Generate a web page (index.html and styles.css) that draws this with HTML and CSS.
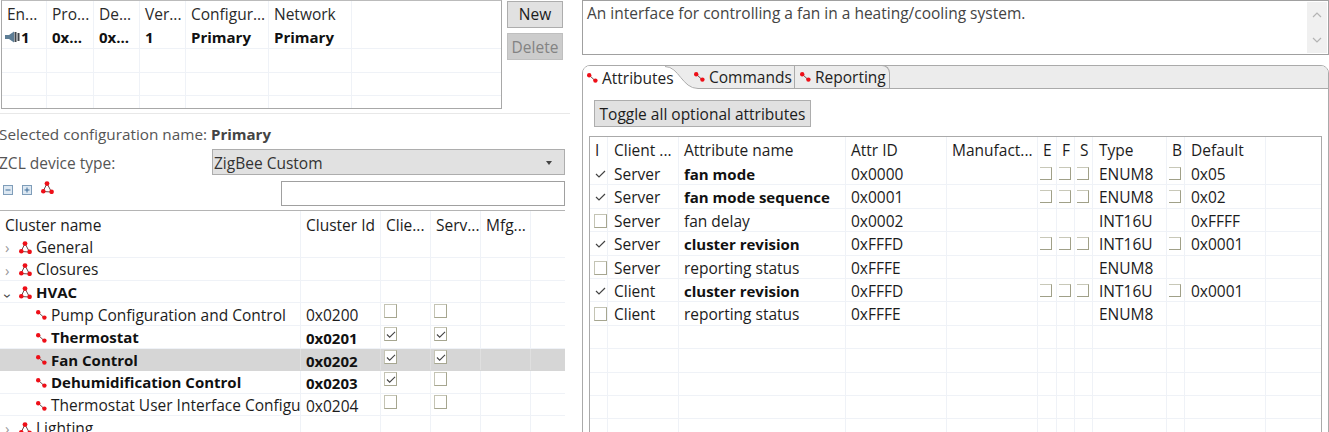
FILE: index.html
```html
<!DOCTYPE html>
<html lang="en">
<head>
<meta charset="utf-8">
<title>Fan Control</title>
<link rel="stylesheet" href="styles.css">
</head>
<body>
<svg class="defs" width="0" height="0" aria-hidden="true">
  <symbol id="group" viewBox="0 0 13 13">
    <path d="M6 2.5 2 10.5M6 2.5 10.5 11M2 10.5 10.5 11" fill="none" stroke="#6a4a4a" stroke-width="1"/>
    <circle cx="6" cy="2.6" r="2.4" fill="#ee0f18"/><circle cx="2.3" cy="10.3" r="2.3" fill="#ee0f18"/><circle cx="10.6" cy="10.8" r="2.3" fill="#ee0f18"/>
  </symbol>
  <symbol id="leaf" viewBox="0 0 11 10">
    <path d="M2 2 8.5 8" stroke="#6a4a4a" stroke-width="1"/>
    <circle cx="2.2" cy="2.2" r="2.2" fill="#ee0f18"/><circle cx="8.4" cy="7.6" r="2.2" fill="#ee0f18"/>
  </symbol>
  <symbol id="tick" viewBox="0 0 11 10">
    <path d="M1 5 4 8 10 2" fill="none" stroke="#444" stroke-width="1.2"/>
  </symbol>
</svg>

<div class="left">
  <div class="endpoints">
    <div class="ep-table">
      <div class="ep-row ep-head"><span>En...</span><span>Pro...</span><span>De...</span><span>Ver...</span><span>Configur...</span><span>Network</span><span></span></div>
      <div class="ep-row strong"><span class="ep-first"><svg class="speaker" viewBox="0 0 15 12"><path d="M0 4h4l5-3.5v11L4 8H0z" fill="#5d7d95"/><path d="M9.500 1h2v10h-2zM12.500 2h2v8h-2z" fill="#3f444a"/></svg>1</span><span>0x...</span><span>0x...</span><span>1</span><span>Primary</span><span>Primary</span><span></span></div>
      <div class="ep-row"><span></span><span></span><span></span><span></span><span></span><span></span><span></span></div>
      <div class="ep-row"><span></span><span></span><span></span><span></span><span></span><span></span><span></span></div>
      <div class="ep-row"><span></span><span></span><span></span><span></span><span></span><span></span><span></span></div>
    </div>
    <div class="ep-buttons">
      <button class="btn">New</button>
      <button class="btn off">Delete</button>
    </div>
  </div>

  <p class="selected">Selected configuration name: <b>Primary</b></p>

  <div class="zcl">
    <span class="zcl-label">ZCL device type:</span>
    <div class="combo"><span>ZigBee Custom</span><i class="caret"></i></div>
  </div>

  <div class="tools">
    <svg class="tool" viewBox="0 0 10 10"><rect x=".5" y=".5" width="9" height="9" fill="#dde8f2" stroke="#7f9db9"/><path d="M2.5 5h5" stroke="#3d6d99"/></svg>
    <svg class="tool" viewBox="0 0 10 10"><rect x=".5" y=".5" width="9" height="9" fill="#dde8f2" stroke="#7f9db9"/><path d="M2.5 5h5M5 2.5v5" stroke="#3d6d99"/></svg>
    <svg class="tool-group"><use href="#group"/></svg>
    <input class="filter" type="text" aria-label="filter">
  </div>

  <div class="tree">
    <div class="tr head"><span>Cluster name</span><span>Cluster Id</span><span>Clie...</span><span>Serv...</span><span>Mfg...</span><span></span></div>
    <div class="tr"><span class="name"><i class="arrow">›</i><svg class="ic-group"><use href="#group"/></svg>General</span><span></span><span></span><span></span><span></span><span></span></div>
    <div class="tr"><span class="name"><i class="arrow">›</i><svg class="ic-group"><use href="#group"/></svg>Closures</span><span></span><span></span><span></span><span></span><span></span></div>
    <div class="tr strong"><span class="name"><i class="arrow open">›</i><svg class="ic-group"><use href="#group"/></svg>HVAC</span><span></span><span></span><span></span><span></span><span></span></div>
    <div class="tr"><span class="name sub"><svg class="ic-leaf"><use href="#leaf"/></svg>Pump Configuration and Control</span><span>0x0200</span><span class="cc"><i class="cb"></i></span><span class="cc"><i class="cb"></i></span><span></span><span></span></div>
    <div class="tr strong"><span class="name sub"><svg class="ic-leaf"><use href="#leaf"/></svg>Thermostat</span><span>0x0201</span><span class="cc"><i class="cb"><svg class="tick"><use href="#tick"/></svg></i></span><span class="cc"><i class="cb"><svg class="tick"><use href="#tick"/></svg></i></span><span></span><span></span></div>
    <div class="tr strong sel"><span class="name sub"><svg class="ic-leaf"><use href="#leaf"/></svg>Fan Control</span><span>0x0202</span><span class="cc"><i class="cb"><svg class="tick"><use href="#tick"/></svg></i></span><span class="cc"><i class="cb"><svg class="tick"><use href="#tick"/></svg></i></span><span></span><span></span></div>
    <div class="tr strong"><span class="name sub"><svg class="ic-leaf"><use href="#leaf"/></svg>Dehumidification Control</span><span>0x0203</span><span class="cc"><i class="cb"><svg class="tick"><use href="#tick"/></svg></i></span><span class="cc"><i class="cb"></i></span><span></span><span></span></div>
    <div class="tr"><span class="name sub"><svg class="ic-leaf"><use href="#leaf"/></svg>Thermostat User Interface Configuration</span><span>0x0204</span><span class="cc"><i class="cb"></i></span><span class="cc"><i class="cb"></i></span><span></span><span></span></div>
    <div class="tr"><span class="name"><i class="arrow">›</i><svg class="ic-group"><use href="#group"/></svg>Lighting</span><span></span><span></span><span></span><span></span><span></span></div>
  </div>
</div>

<div class="right">
  <div class="desc">
    <p>An interface for controlling a fan in a heating/cooling system.</p>
    <div class="scroll">
      <svg viewBox="0 0 10 6"><path d="M1 5 5 1l4 4" fill="none" stroke="#b4b4b4" stroke-width="1.2"/></svg>
      <svg viewBox="0 0 10 6"><path d="M1 1l4 4 4-4" fill="none" stroke="#b4b4b4" stroke-width="1.2"/></svg>
    </div>
  </div>

  <div class="folder">
    <div class="tabs">
      <div class="tab active"><svg class="ic-tab"><use href="#leaf"/></svg>Attributes</div>
      <svg class="tail" viewBox="0 0 33 23" preserveAspectRatio="none"><path d="M0 0C14 0 17 22 33 22V23H0Z" fill="#fff"/><path d="M0 .5C14 .5 17 22.5 33 22.5" fill="none" stroke="#aaa"/></svg>
      <div class="tab t2"><svg class="ic-tab"><use href="#leaf"/></svg>Commands</div>
      <div class="tab t3"><svg class="ic-tab"><use href="#leaf"/></svg>Reporting</div>
    </div>
    <div class="pane">
      <button class="btn toggle">Toggle all optional attributes</button>
      <div class="attrs">
        <div class="ar head"><span>I</span><span>Client ...</span><span>Attribute name</span><span>Attr ID</span><span>Manufact...</span><span>E</span><span>F</span><span>S</span><span>Type</span><span>B</span><span>Default</span><span></span></div>
        <div class="ar"><span class="ci"><svg class="tick2"><use href="#tick"/></svg></span><span>Server</span><span class="b">fan mode</span><span>0x0000</span><span></span><span class="cs"><i class="sq"></i></span><span class="cs"><i class="sq"></i></span><span class="cs"><i class="sq"></i></span><span>ENUM8</span><span class="cs"><i class="sq"></i></span><span>0x05</span><span></span></div>
        <div class="ar"><span class="ci"><svg class="tick2"><use href="#tick"/></svg></span><span>Server</span><span class="b">fan mode sequence</span><span>0x0001</span><span></span><span class="cs"><i class="sq"></i></span><span class="cs"><i class="sq"></i></span><span class="cs"><i class="sq"></i></span><span>ENUM8</span><span class="cs"><i class="sq"></i></span><span>0x02</span><span></span></div>
        <div class="ar"><span class="ci"><i class="cb"></i></span><span>Server</span><span>fan delay</span><span>0x0002</span><span></span><span></span><span></span><span></span><span>INT16U</span><span></span><span>0xFFFF</span><span></span></div>
        <div class="ar"><span class="ci"><svg class="tick2"><use href="#tick"/></svg></span><span>Server</span><span class="b">cluster revision</span><span>0xFFFD</span><span></span><span class="cs"><i class="sq"></i></span><span class="cs"><i class="sq"></i></span><span class="cs"><i class="sq"></i></span><span>INT16U</span><span class="cs"><i class="sq"></i></span><span>0x0001</span><span></span></div>
        <div class="ar"><span class="ci"><i class="cb"></i></span><span>Server</span><span>reporting status</span><span>0xFFFE</span><span></span><span></span><span></span><span></span><span>ENUM8</span><span></span><span></span><span></span></div>
        <div class="ar"><span class="ci"><svg class="tick2"><use href="#tick"/></svg></span><span>Client</span><span class="b">cluster revision</span><span>0xFFFD</span><span></span><span class="cs"><i class="sq"></i></span><span class="cs"><i class="sq"></i></span><span class="cs"><i class="sq"></i></span><span>INT16U</span><span class="cs"><i class="sq"></i></span><span>0x0001</span><span></span></div>
        <div class="ar"><span class="ci"><i class="cb"></i></span><span>Client</span><span>reporting status</span><span>0xFFFE</span><span></span><span></span><span></span><span></span><span>ENUM8</span><span></span><span></span><span></span></div>
        <div class="ar"><span></span><span></span><span></span><span></span><span></span><span></span><span></span><span></span><span></span><span></span><span></span><span></span></div>
        <div class="ar"><span></span><span></span><span></span><span></span><span></span><span></span><span></span><span></span><span></span><span></span><span></span><span></span></div>
        <div class="ar"><span></span><span></span><span></span><span></span><span></span><span></span><span></span><span></span><span></span><span></span><span></span><span></span></div>
        <div class="ar"><span></span><span></span><span></span><span></span><span></span><span></span><span></span><span></span><span></span><span></span><span></span><span></span></div>
        <div class="ar"><span></span><span></span><span></span><span></span><span></span><span></span><span></span><span></span><span></span><span></span><span></span><span></span></div>
      </div>
    </div>
  </div>
</div>
</body>
</html>
```
FILE: styles.css
```css
* { box-sizing: border-box; }
html, body { height: 432px; overflow: hidden; }
body {
  margin: 0;
  display: flex;
  background: #fff;
  color: #1c1c1c;
  font: 15.5px/20px "Open Sans", "Noto Sans", sans-serif;
}
.defs { position: absolute; }
p { margin: 0; }
i { font-style: normal; display: block; }
.strong, .ar .b { font-size: 15px; }
.left { width: 565px; flex: none; margin-right: 17px; }
.right { flex: 1; min-width: 0; }

.endpoints {
  display: flex;
  height: 114px;
  width: 570px;
  border-bottom: 1px solid #e8e8e8;
}
.ep-table {
  margin-left: 1px;
  width: 501px;
  height: 109px;
  border: 1px solid #a8a8a8;
  border-top-color: #bbb;
  overflow: hidden;
}
.ep-row {
  display: grid;
  grid-template-columns: 45px 47px 46px 46px 83px 83px 1fr;
  height: 23.4px;
  border-bottom: 1px solid #eff2f7;
  line-height: 23px;
}
.ep-head { height: 25px; border-bottom: 0; line-height: 27px; color: #2a2a2a; }
.ep-row span { padding-left: 5px; border-right: 1px solid #eff2f7; white-space: nowrap; overflow: hidden; }
.ep-row span:last-child { border-right: 0; }
.strong { font-weight: 700; color: #111; }
.ep-row .ep-first { padding-left: 3px; display: flex; align-items: center; }
.speaker { width: 15px; height: 12px; margin-right: 1px; flex: none; }
.ep-buttons { display: flex; flex-direction: column; gap: 5px; margin: 1px 0 0 5px; }
.btn {
  font: inherit;
  color: #1c1c1c;
  background: #e1e1e1;
  border: 1px solid #adadad;
  padding: 0 0 2px;
}
.ep-buttons .btn { width: 56px; height: 27px; }
.btn.off { background: #ccc; color: #838383; border-color: #bfbfbf; padding-bottom: 0; }

.selected { margin: 10px 0 0 -1px; color: #555; height: 19px; font-size: 15.3px; }
.selected b { color: #444; font-size: 15px; }

.zcl { display: flex; align-items: center; height: 26px; margin-top: 6px; }
.zcl-label { width: 213px; margin-left: -1px; padding-top: 2px; flex: none; color: #555; }
.combo {
  flex: 1;
  height: 26px;
  background: #e1e1e1;
  border: 1px solid #adadad;
  display: flex;
  align-items: center;
  justify-content: space-between;
  padding: 2px 12px 0 1px;
  color: #333;
}
.caret { width: 0; height: 0; border: 3.5px solid transparent; border-top: 4px solid #444; border-bottom: 0; }

.tools { display: flex; align-items: flex-start; height: 25px; margin-top: 6px; padding-left: 3px; }
.tool { width: 10px; height: 10px; margin: 4px 9px 0 0; flex: none; }
.tool-group { width: 13px; height: 13px; flex: none; }
.filter { width: 284px; height: 25px; margin-left: auto; border: 1px solid #a0a0a0; background: #fff; padding: 0; }

.tree { margin-top: 4px; border-top: 1px solid #b4b4b4; }
.tr {
  display: grid;
  grid-template-columns: 301px 80px 50px 50px 50px 1fr;
  height: 22.6px;
  border-bottom: 1px solid #eff2f7;
  line-height: 25px;
}
.tr.head { height: 24.6px; border-bottom: 0; line-height: 29px; }
.tr > span { padding-left: 5px; border-right: 1px solid #eff2f7; white-space: nowrap; overflow: hidden; }
.tr > span:last-child { border-right: 0; }
.tr .name { display: flex; align-items: center; padding: 2px 0 0 5px; }
.tr .name.sub { padding-left: 36px; }
.arrow { width: 14px; flex: none; color: #999; font-size: 15px; font-weight: 400; line-height: 18px; }
.arrow.open { color: #444; transform: rotate(90deg); text-align: center; transform-origin: 4px 9px; }
.ic-group { width: 13px; height: 13px; margin-right: 4px; flex: none; }
.ic-leaf { width: 11px; height: 10px; margin-right: 4px; flex: none; }
.tr.sel { background: #d6d6d6; border-bottom-color: #d6d6d6; }
.tr.sel > span { border-right-color: #dfdfdf; }
.tr > .cc { padding: 1px 0 0 3px; }
.cb {
  display: block;
  width: 13px;
  height: 14px;
  border: 1px solid #a6a690;
  border-top-color: #c4c4b4;
  border-left-color: #c4c4b4;
  background: #fff;
}
.tick { width: 10px; height: 9px; display: block; margin: 2px 0 0 1px; }

.desc {
  height: 55px;
  border: 1px solid #a0a0a0;
  display: flex;
  justify-content: space-between;
  padding: 1px 1px 1px 4px;
  color: #444;
}
.desc p { line-height: 23px; }
.scroll {
  width: 20px;
  background: #f0f0f0;
  display: flex;
  flex-direction: column;
  justify-content: space-between;
  align-items: center;
  padding: 10px 0;
}
.scroll svg { width: 10px; height: 6px; }

.folder {
  margin-top: 10px;
  height: 380px;
  border: 1px solid #aaa;
  border-radius: 8px 8px 0 0;
  overflow: hidden;
}
.tabs {
  display: flex;
  height: 23px;
  background: #ececec;
  border-bottom: 1px solid #aaa;
}
.tab { display: flex; align-items: center; height: 22px; padding-left: 4px; white-space: nowrap; color: #222; }
.tab.active { width: 82px; height: 23px; background: #fff; flex: none; position: relative; z-index: 1; }
.tail { width: 33px; height: 23px; flex: none; margin-right: -4px; }
.tab.t2 { width: 101px; border-right: 1px solid #aaa; padding-left: 0; }
.tab.t3 { width: 95px; border-right: 1px solid #aaa; border-radius: 0 8px 0 0; border-top: 1px solid #aaa; margin-top: -1px; height: 23px; padding-left: 5px; }
.ic-tab { width: 11px; height: 10px; margin-right: 4px; flex: none; }

.pane { padding: 11px 6px 0; }
.toggle { display: block; margin-left: 5px; width: 217px; height: 27px; padding-bottom: 0; }
.attrs { margin-top: 9px; border: 1px solid #aaa; border-bottom: 0; height: 300px; overflow: hidden; }
.ar {
  display: grid;
  grid-template-columns: 18px 71px 167px 101px 91px 19px 18px 18px 74px 18px 81px 1fr;
  height: 23.4px;
  border-bottom: 1px solid #eff2f7;
  line-height: 24px;
}
.ar.head { height: 25px; border-bottom: 0; line-height: 27px; }
.ar > span { padding-left: 5px; border-right: 1px solid #eff2f7; white-space: nowrap; overflow: hidden; }
.ar > span:last-child { border-right: 0; }
.ar > span:nth-child(2), .ar > span:nth-child(9), .ar > span:nth-child(11) { padding-left: 6px; }
.ar .b { font-weight: 700; color: #111; }
.ar > .ci { padding: 5px 0 0 4px; }
.tick2 { width: 11px; height: 10px; display: block; margin: 2px 0 0 1px; }
.ar > .cs { padding: 5px 0 0 2px; }
.sq {
  width: 12px;
  height: 13px;
  border: 1px solid #a0a088;
  border-left: 0;
  border-top-color: #c8c8b8;
}
```
